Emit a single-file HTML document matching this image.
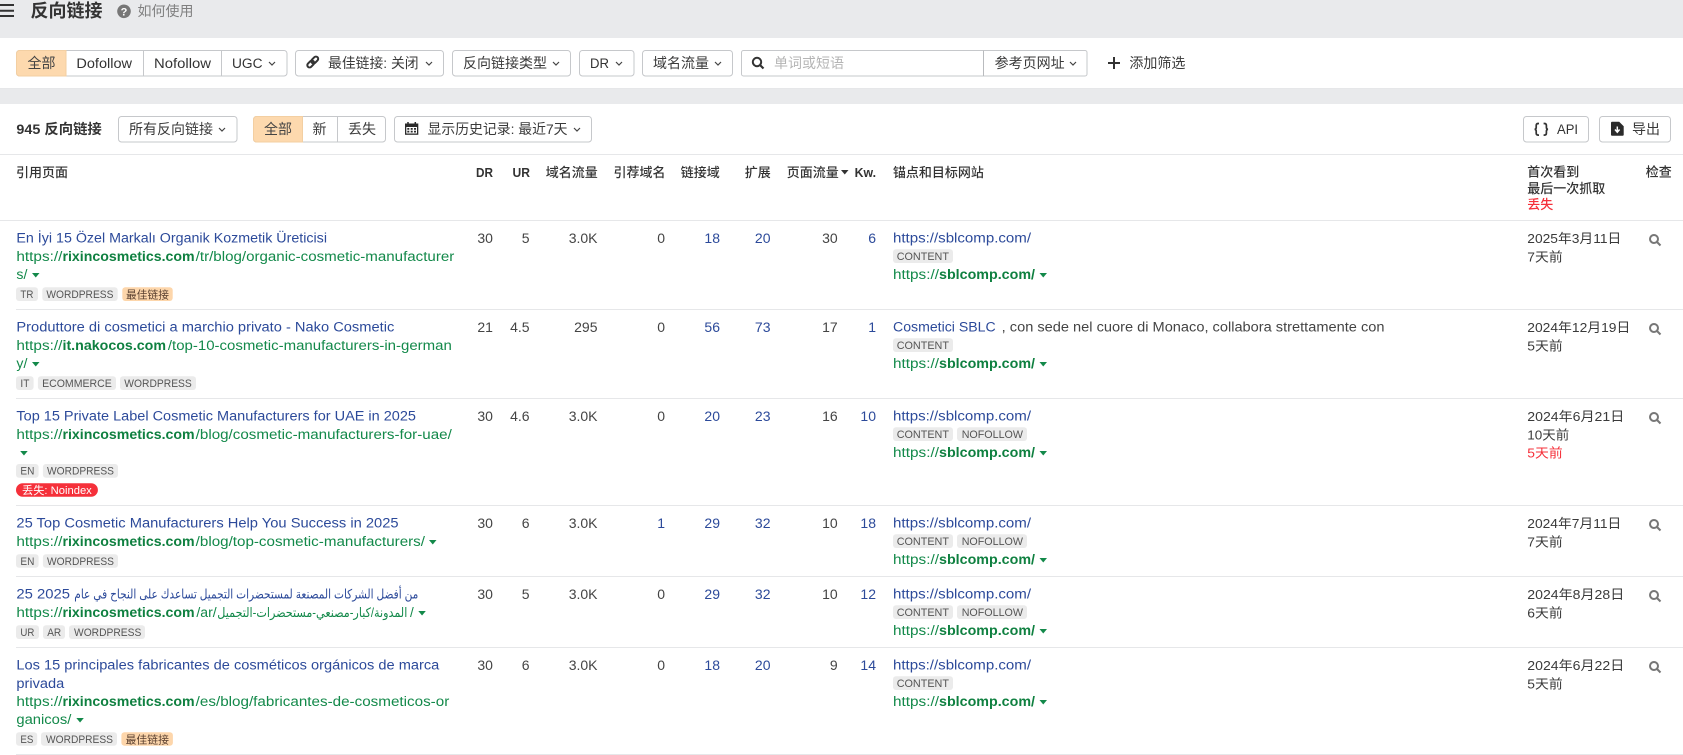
<!DOCTYPE html>
<html lang="zh-CN"><head><meta charset="utf-8"><title>反向链接</title>
<style>
html,body{margin:0;padding:0;background:#fff;overflow:hidden}
svg{display:block;position:absolute;left:0;top:0}
text{font-family:"Liberation Sans","Noto Sans CJK SC",sans-serif;font-size:13.5px;fill:#333}
.h{font-size:13px;font-weight:500;fill:#333}
.hl{font-size:13px;font-weight:700;fill:#333}
.n{font-size:14px;fill:#444;text-anchor:end}
.nb{font-size:14px;fill:#2c4a9a;text-anchor:end}
.l{fill:#2c4a9a}
.g{fill:#13894a}
.gb{fill:#0f8040;font-weight:700}
.a{font-family:"Liberation Sans","DejaVu Sans",sans-serif}
.tg{font-size:11px;fill:#555}
.tc{font-size:11px;fill:#5a4030}
.d{font-size:13px;fill:#3a3a3a}
.b{fill:#fff;stroke:#c6c8cb}
.ln{stroke:#e6e7e9;stroke-width:1}
.ch{fill:none;stroke:#444;stroke-width:1.2}
.tag{fill:#ebebeb}
.best{fill:#fdd6ab}
.s{fill:none;stroke:#777;stroke-width:2}
.tri{fill:#13894a}
</style></head><body>
<svg width="1683" height="755" viewBox="0 0 1683 755" xmlns="http://www.w3.org/2000/svg">
<rect x="0" y="0" width="1683" height="38" fill="#e9eaec"/>
<rect x="0" y="88" width="1683" height="16" fill="#e9eaec"/>
<path class="ln" d="M0 88.500H1683M0 154.500H1683M0 220.500H1683M16 309.500H1683M16 398.500H1683M16 505.500H1683M16 576.500H1683M16 647.500H1683M16 754.500H1683"/>

<!-- top -->
<path d="M0 5H14M0 10.700H14M0 16H14" stroke="#333" stroke-width="2" fill="none"/>
<text x="30.500" y="17" style="font-size:18px;font-weight:700;fill:#333">反向链接</text>
<circle cx="124" cy="11.300" r="6.800" fill="#777"/>
<text x="124" y="15.300" text-anchor="middle" style="font-size:11px;font-weight:700;fill:#fff">?</text>
<text x="137.500" y="16" style="font-size:14px;fill:#808080">如何使用</text>

<!-- filter row -->
<rect class="b" x="16.500" y="50.500" width="270.500" height="25.500" rx="3"/>
<path d="M19.500 50.500H66V76H19.500a3 3 0 0 1-3-3V53.500a3 3 0 0 1 3-3z" fill="#fdd9ae" stroke="#f3cfa2"/>
<path d="M143.500 50.500V76M221.500 50.500V76" stroke="#c6c8cb"/>
<text x="27.500" y="68" style="font-size:14px;fill:#444">全部</text>
<text x="76.400" y="68" textLength="55.600" lengthAdjust="spacingAndGlyphs">Dofollow</text>
<text x="154" y="68" textLength="57" lengthAdjust="spacingAndGlyphs">Nofollow</text>
<text x="232" y="68" textLength="30.500" lengthAdjust="spacingAndGlyphs">UGC</text>
<path class="ch" d="M269 62l3 3 3-3"/>

<rect class="b" x="295.500" y="50.500" width="148" height="25.500" rx="3"/>
<g fill="none" stroke="#333" stroke-width="2" transform="rotate(-45 312.750 62)"><rect x="306" y="59.750" width="7.800" height="4.500" rx="2.250"/><rect x="311.700" y="59.750" width="7.800" height="4.500" rx="2.250"/></g>
<text x="328" y="68" textLength="90.600" lengthAdjust="spacingAndGlyphs" style="font-size:14px;fill:#3a3a3a">最佳链接: 关闭</text>
<path class="ch" d="M426 62l3 3 3-3"/>

<rect class="b" x="452.500" y="50.500" width="118" height="25.500" rx="3"/>
<text x="463" y="68" style="font-size:14px;fill:#3a3a3a">反向链接类型</text>
<path class="ch" d="M553 62l3 3 3-3"/>

<rect class="b" x="579.500" y="50.500" width="54.500" height="25.500" rx="3"/>
<text x="590" y="68" textLength="19" lengthAdjust="spacingAndGlyphs">DR</text>
<path class="ch" d="M616 62l3 3 3-3"/>

<rect class="b" x="642.500" y="50.500" width="90" height="25.500" rx="3"/>
<text x="653" y="68" style="font-size:14px;fill:#3a3a3a">域名流量</text>
<path class="ch" d="M715 62l3 3 3-3"/>

<rect class="b" x="741.500" y="50.500" width="345.500" height="25.500" rx="2"/>
<path d="M983.500 50.500V76" stroke="#b9bbbe"/>
<circle cx="757" cy="62" r="4.200" fill="none" stroke="#333" stroke-width="2"/><path d="M760 65l3.500 3.500" stroke="#333" stroke-width="2.200"/>
<text x="774" y="68" style="font-size:14px;fill:#b5b5b5">单词或短语</text>
<text x="994.600" y="68" style="font-size:14px;fill:#3a3a3a">参考页网址</text>
<path class="ch" d="M1070 62l3 3 3-3"/>
<path d="M1108 63H1120M1114 57V69" stroke="#333" stroke-width="2"/>
<text x="1129.400" y="68" style="font-size:14px;fill:#3a3a3a">添加筛选</text>

<!-- toolbar 2 -->
<text x="16.400" y="134" textLength="85.400" lengthAdjust="spacingAndGlyphs" style="font-size:14px;font-weight:700;fill:#333">945 反向链接</text>
<rect class="b" x="118.500" y="116.500" width="118.500" height="25.500" rx="3"/>
<text x="129" y="134" style="font-size:14px;fill:#3a3a3a">所有反向链接</text>
<path class="ch" d="M219 128l3 3 3-3"/>
<rect class="b" x="253.500" y="116.500" width="132" height="25.500" rx="3"/>
<path d="M256.500 116.500H302.500V142H256.500a3 3 0 0 1-3-3V119.500a3 3 0 0 1 3-3z" fill="#fdd9ae" stroke="#f3cfa2"/>
<path d="M337.500 116.500V142" stroke="#c6c8cb"/>
<text x="264" y="134" style="font-size:14px;fill:#444">全部</text>
<text x="312.500" y="134" style="font-size:14px;fill:#3a3a3a">新</text>
<text x="348" y="134" style="font-size:14px;fill:#3a3a3a">丢失</text>
<rect class="b" x="394.500" y="116.500" width="197" height="25.500" rx="3"/>
<path d="M405 123.500h13.300v11.300h-13.300z" fill="#2b2b2b"/><path d="M408 122v2.500M415.300 122v2.500" stroke="#2b2b2b" stroke-width="1.500"/>
<path d="M406.300 127h10.700v6.500h-10.700z" fill="#fff"/><path d="M407.300 128h2v1.700h-2zM410.700 128h2v1.700h-2zM414 128h2v1.700h-2zM407.300 130.800h2v1.700h-2zM410.700 130.800h2v1.700h-2zM414 130.800h2v1.700h-2z" fill="#2b2b2b"/>
<text x="427.500" y="134" textLength="140" lengthAdjust="spacingAndGlyphs" style="font-size:14px;fill:#3a3a3a">显示历史记录: 最近7天</text>
<path class="ch" d="M574 128l3 3 3-3"/>

<rect class="b" x="1523.500" y="116.500" width="65" height="25.500" rx="3"/>
<path d="M1539 123.500h-.8q-2 0-2 2v2q0 1.500-1.500 1.800 1.500.3 1.500 1.800v2q0 2 2 2h.8M1543.600 123.500h.8q2 0 2 2v2q0 1.500 1.500 1.800-1.500.3-1.500 1.800v2q0 2-2 2h-.8" fill="none" stroke="#333" stroke-width="1.700"/>
<text x="1557" y="134" textLength="21" lengthAdjust="spacingAndGlyphs">API</text>
<rect class="b" x="1599.500" y="116.500" width="71" height="25.500" rx="3"/>
<path d="M1612 121.700h7.200l4.500 4.500v8.500a1 1 0 0 1-1 1h-10.700a1 1 0 0 1-1-1v-12a1 1 0 0 1 1-1z" fill="#2b2b2b"/><path d="M1617.300 126.500v5M1615 129.500l2.300 2.700 2.300-2.700" stroke="#fff" stroke-width="1.500" fill="none"/>
<text x="1632" y="134" style="font-size:14px;fill:#3a3a3a">导出</text>

<!-- header -->
<g>
<text class="h" x="16" y="177">引用页面</text>
<text class="hl" x="476" y="177" textLength="17" lengthAdjust="spacingAndGlyphs">DR</text>
<text class="hl" x="512.500" y="177" textLength="17.500" lengthAdjust="spacingAndGlyphs">UR</text>
<text class="h" x="545.700" y="177">域名流量</text>
<text class="h" x="613.500" y="177">引荐域名</text>
<text class="h" x="680.800" y="177">链接域</text>
<text class="h" x="744.700" y="177">扩展</text>
<text class="h" x="786.800" y="177">页面流量</text>
<path d="M841 170h7.500l-3.750 4.500z" fill="#333"/>
<text class="hl" x="854.600" y="177" textLength="21.400" lengthAdjust="spacingAndGlyphs">Kw.</text>
<text class="h" x="892.900" y="177">锚点和目标网站</text>
<text class="h" x="1527.300" y="176.500">首次看到</text>
<text class="h" x="1527.300" y="193">最后一次抓取</text>
<text class="h" x="1527.300" y="209" style="fill:#f5303a">丢失</text>
<text class="h" x="1645.700" y="176.500">检查</text>
</g>

<!-- row 1 -->
<text class="l" x="16.400" y="242.500" textLength="310.600" lengthAdjust="spacingAndGlyphs">En İyi 15 Özel Markalı Organik Kozmetik Üreticisi</text>
<text class="g" x="16.400" y="261" textLength="46" lengthAdjust="spacingAndGlyphs">https://</text>
<text class="gb" x="62.500" y="261" textLength="132.100" lengthAdjust="spacingAndGlyphs">rixincosmetics.com</text>
<text class="g" x="195.700" y="261" textLength="258.600" lengthAdjust="spacingAndGlyphs">/tr/blog/organic-cosmetic-manufacturer</text>
<text class="g" x="16.400" y="279" textLength="11" lengthAdjust="spacingAndGlyphs">s/</text>
<path class="tri" d="M32 273h7.500l-3.750 4.500z"/>
<rect class="tag" x="16" y="287.300" width="22" height="13.700" rx="3"/><text class="tg" x="20.400" y="298" textLength="13" lengthAdjust="spacingAndGlyphs">TR</text>
<rect class="tag" x="42.300" y="287.300" width="75.400" height="13.700" rx="3"/><text class="tg" x="46.400" y="298" textLength="67" lengthAdjust="spacingAndGlyphs">WORDPRESS</text>
<rect class="best" x="122.300" y="287.300" width="50.400" height="13.700" rx="3"/><text class="tc" x="126" y="298.500" textLength="43" lengthAdjust="spacingAndGlyphs">最佳链接</text>
<text class="n" x="492.900" y="243">30</text><text class="n" x="529.600" y="243">5</text><text class="n" x="597.500" y="243">3.0K</text><text class="n" x="665" y="243">0</text><text class="nb" x="720" y="243">18</text><text class="nb" x="770.500" y="243">20</text><text class="n" x="837.700" y="243">30</text><text class="nb" x="876" y="243">6</text>
<text class="l" x="893" y="242.500" textLength="138" lengthAdjust="spacingAndGlyphs">https://sblcomp.com/</text>
<rect class="tag" x="893" y="249.300" width="60" height="13.700" rx="3"/><text class="tg" x="896.700" y="260" textLength="52.300" lengthAdjust="spacingAndGlyphs">CONTENT</text>
<text class="g" x="893" y="279" textLength="46" lengthAdjust="spacingAndGlyphs">https://</text><text class="gb" x="939" y="279" textLength="96" lengthAdjust="spacingAndGlyphs">sblcomp.com/</text>
<path class="tri" d="M1039.500 273h7.500l-3.750 4.500z"/>
<text class="d" x="1527.300" y="243" textLength="94" lengthAdjust="spacingAndGlyphs">2025年3月11日</text>
<text class="d" x="1527.300" y="261.500" textLength="35.400" lengthAdjust="spacingAndGlyphs">7天前</text>
<circle class="s" cx="1654" cy="239" r="4"/><path class="s" d="M1657 242l3.500 3.500"/>

<!-- row 2 -->
<text class="l" x="16.400" y="331.500" textLength="377.900" lengthAdjust="spacingAndGlyphs">Produttore di cosmetici a marchio privato - Nako Cosmetic</text>
<text class="g" x="16.400" y="350" textLength="46" lengthAdjust="spacingAndGlyphs">https://</text>
<text class="gb" x="62.500" y="350" textLength="103.500" lengthAdjust="spacingAndGlyphs">it.nakocos.com</text>
<text class="g" x="167.900" y="350" textLength="283.900" lengthAdjust="spacingAndGlyphs">/top-10-cosmetic-manufacturers-in-german</text>
<text class="g" x="16.400" y="368" textLength="11" lengthAdjust="spacingAndGlyphs">y/</text>
<path class="tri" d="M32 362h7.500l-3.750 4.500z"/>
<rect class="tag" x="16" y="376.300" width="17.600" height="13.700" rx="3"/><text class="tg" x="20.400" y="387" textLength="9" lengthAdjust="spacingAndGlyphs">IT</text>
<rect class="tag" x="37.900" y="376.300" width="78.100" height="13.700" rx="3"/><text class="tg" x="42.100" y="387" textLength="69.700" lengthAdjust="spacingAndGlyphs">ECOMMERCE</text>
<rect class="tag" x="120" y="376.300" width="76" height="13.700" rx="3"/><text class="tg" x="124.300" y="387" textLength="67.500" lengthAdjust="spacingAndGlyphs">WORDPRESS</text>
<text class="n" x="492.900" y="332">21</text><text class="n" x="529.600" y="332">4.5</text><text class="n" x="597.500" y="332">295</text><text class="n" x="665" y="332">0</text><text class="nb" x="720" y="332">56</text><text class="nb" x="770.500" y="332">73</text><text class="n" x="837.700" y="332">17</text><text class="nb" x="876" y="332">1</text>
<text class="l" x="893" y="331.500" textLength="102.700" lengthAdjust="spacingAndGlyphs">Cosmetici SBLC</text>
<text x="1001.700" y="331.500" textLength="382.800" lengthAdjust="spacingAndGlyphs" style="fill:#444">, con sede nel cuore di Monaco, collabora strettamente con</text>
<rect class="tag" x="893" y="338.300" width="60" height="13.700" rx="3"/><text class="tg" x="896.700" y="349" textLength="52.300" lengthAdjust="spacingAndGlyphs">CONTENT</text>
<text class="g" x="893" y="368" textLength="46" lengthAdjust="spacingAndGlyphs">https://</text><text class="gb" x="939" y="368" textLength="96" lengthAdjust="spacingAndGlyphs">sblcomp.com/</text>
<path class="tri" d="M1039.500 362h7.500l-3.750 4.500z"/>
<text class="d" x="1527.300" y="332" textLength="103" lengthAdjust="spacingAndGlyphs">2024年12月19日</text>
<text class="d" x="1527.300" y="350.500" textLength="35.400" lengthAdjust="spacingAndGlyphs">5天前</text>
<circle class="s" cx="1654" cy="328" r="4"/><path class="s" d="M1657 331l3.500 3.500"/>

<!-- row 3 -->
<text class="l" x="16.400" y="420.500" textLength="399.600" lengthAdjust="spacingAndGlyphs">Top 15 Private Label Cosmetic Manufacturers for UAE in 2025</text>
<text class="g" x="16.400" y="439" textLength="46" lengthAdjust="spacingAndGlyphs">https://</text>
<text class="gb" x="62.500" y="439" textLength="132.100" lengthAdjust="spacingAndGlyphs">rixincosmetics.com</text>
<text class="g" x="195.700" y="439" textLength="256.100" lengthAdjust="spacingAndGlyphs">/blog/cosmetic-manufacturers-for-uae/</text>
<path class="tri" d="M20.200 451h7.500l-3.750 4.500z"/>
<rect class="tag" x="16" y="464" width="22.600" height="13.700" rx="3"/><text class="tg" x="20.400" y="474.700" textLength="14" lengthAdjust="spacingAndGlyphs">EN</text>
<rect class="tag" x="42.900" y="464" width="75.100" height="13.700" rx="3"/><text class="tg" x="47" y="474.700" textLength="67" lengthAdjust="spacingAndGlyphs">WORDPRESS</text>
<rect x="16" y="483.300" width="81.900" height="13.400" rx="6.700" fill="#f5303a"/><text x="22" y="494" textLength="69.800" lengthAdjust="spacingAndGlyphs" style="font-size:11px;fill:#fff">丢失: Noindex</text>
<text class="n" x="492.900" y="421">30</text><text class="n" x="529.600" y="421">4.6</text><text class="n" x="597.500" y="421">3.0K</text><text class="n" x="665" y="421">0</text><text class="nb" x="720" y="421">20</text><text class="nb" x="770.500" y="421">23</text><text class="n" x="837.700" y="421">16</text><text class="nb" x="876" y="421">10</text>
<text class="l" x="893" y="420.500" textLength="138" lengthAdjust="spacingAndGlyphs">https://sblcomp.com/</text>
<rect class="tag" x="893" y="427.300" width="60" height="13.700" rx="3"/><text class="tg" x="896.700" y="438" textLength="52.300" lengthAdjust="spacingAndGlyphs">CONTENT</text>
<rect class="tag" x="957" y="427.300" width="70" height="13.700" rx="3"/><text class="tg" x="961.700" y="438" textLength="61.300" lengthAdjust="spacingAndGlyphs">NOFOLLOW</text>
<text class="g" x="893" y="457" textLength="46" lengthAdjust="spacingAndGlyphs">https://</text><text class="gb" x="939" y="457" textLength="96" lengthAdjust="spacingAndGlyphs">sblcomp.com/</text>
<path class="tri" d="M1039.500 451h7.500l-3.750 4.500z"/>
<text class="d" x="1527.300" y="421" textLength="97" lengthAdjust="spacingAndGlyphs">2024年6月21日</text>
<text class="d" x="1527.300" y="439.500" textLength="42" lengthAdjust="spacingAndGlyphs">10天前</text>
<text class="d" x="1527.300" y="457.500" textLength="35.400" lengthAdjust="spacingAndGlyphs" style="fill:#f5303a">5天前</text>
<circle class="s" cx="1654" cy="417" r="4"/><path class="s" d="M1657 420l3.500 3.500"/>

<!-- row 4 -->
<text class="l" x="16.400" y="527.500" textLength="382.200" lengthAdjust="spacingAndGlyphs">25 Top Cosmetic Manufacturers Help You Success in 2025</text>
<text class="g" x="16.400" y="546" textLength="46" lengthAdjust="spacingAndGlyphs">https://</text>
<text class="gb" x="62.500" y="546" textLength="132.100" lengthAdjust="spacingAndGlyphs">rixincosmetics.com</text>
<text class="g" x="195.700" y="546" textLength="229.300" lengthAdjust="spacingAndGlyphs">/blog/top-cosmetic-manufacturers/</text>
<path class="tri" d="M429 540h7.500l-3.750 4.500z"/>
<rect class="tag" x="16" y="554.300" width="22.600" height="13.400" rx="3"/><text class="tg" x="20.400" y="565" textLength="14" lengthAdjust="spacingAndGlyphs">EN</text>
<rect class="tag" x="42.900" y="554.300" width="75.100" height="13.400" rx="3"/><text class="tg" x="47" y="565" textLength="67" lengthAdjust="spacingAndGlyphs">WORDPRESS</text>
<text class="n" x="492.900" y="528">30</text><text class="n" x="529.600" y="528">6</text><text class="n" x="597.500" y="528">3.0K</text><text class="nb" x="665" y="528">1</text><text class="nb" x="720" y="528">29</text><text class="nb" x="770.500" y="528">32</text><text class="n" x="837.700" y="528">10</text><text class="nb" x="876" y="528">18</text>
<text class="l" x="893" y="527.500" textLength="138" lengthAdjust="spacingAndGlyphs">https://sblcomp.com/</text>
<rect class="tag" x="893" y="534.300" width="60" height="13.700" rx="3"/><text class="tg" x="896.700" y="545" textLength="52.300" lengthAdjust="spacingAndGlyphs">CONTENT</text>
<rect class="tag" x="957" y="534.300" width="70" height="13.700" rx="3"/><text class="tg" x="961.700" y="545" textLength="61.300" lengthAdjust="spacingAndGlyphs">NOFOLLOW</text>
<text class="g" x="893" y="564" textLength="46" lengthAdjust="spacingAndGlyphs">https://</text><text class="gb" x="939" y="564" textLength="96" lengthAdjust="spacingAndGlyphs">sblcomp.com/</text>
<path class="tri" d="M1039.500 558h7.500l-3.750 4.500z"/>
<text class="d" x="1527.300" y="528" textLength="94" lengthAdjust="spacingAndGlyphs">2024年7月11日</text>
<text class="d" x="1527.300" y="546.500" textLength="35.400" lengthAdjust="spacingAndGlyphs">7天前</text>
<circle class="s" cx="1654" cy="524" r="4"/><path class="s" d="M1657 527l3.500 3.500"/>

<!-- row 5 -->
<text class="l" x="16.400" y="598.500" textLength="53.600" lengthAdjust="spacingAndGlyphs">25 2025</text>
<text class="l a" x="74.300" y="598.500" textLength="344" lengthAdjust="spacingAndGlyphs" style="font-size:13px">من أفضل الشركات المصنعة لمستحضرات التجميل تساعدك على النجاح في عام</text>
<text class="g" x="16.400" y="617" textLength="46" lengthAdjust="spacingAndGlyphs">https://</text>
<text class="gb" x="62.500" y="617" textLength="132.100" lengthAdjust="spacingAndGlyphs">rixincosmetics.com</text>
<text class="g" x="196.400" y="617" textLength="20.300" lengthAdjust="spacingAndGlyphs">/ar/</text>
<text class="g a" x="217.300" y="617" textLength="190" lengthAdjust="spacingAndGlyphs" style="font-size:13px">المدونة/كبار-مصنعي-مستحضرات-التجميل</text>
<text class="g" x="410" y="617">/</text>
<path class="tri" d="M418.300 611h7.500l-3.750 4.500z"/>
<rect class="tag" x="16" y="625.300" width="23" height="13.700" rx="3"/><text class="tg" x="20.400" y="636" textLength="14" lengthAdjust="spacingAndGlyphs">UR</text>
<rect class="tag" x="43" y="625.300" width="22" height="13.700" rx="3"/><text class="tg" x="47.200" y="636" textLength="14" lengthAdjust="spacingAndGlyphs">AR</text>
<rect class="tag" x="69" y="625.300" width="76" height="13.700" rx="3"/><text class="tg" x="74" y="636" textLength="67.300" lengthAdjust="spacingAndGlyphs">WORDPRESS</text>
<text class="n" x="492.900" y="599">30</text><text class="n" x="529.600" y="599">5</text><text class="n" x="597.500" y="599">3.0K</text><text class="n" x="665" y="599">0</text><text class="nb" x="720" y="599">29</text><text class="nb" x="770.500" y="599">32</text><text class="n" x="837.700" y="599">10</text><text class="nb" x="876" y="599">12</text>
<text class="l" x="893" y="598.500" textLength="138" lengthAdjust="spacingAndGlyphs">https://sblcomp.com/</text>
<rect class="tag" x="893" y="605.300" width="60" height="13.700" rx="3"/><text class="tg" x="896.700" y="616" textLength="52.300" lengthAdjust="spacingAndGlyphs">CONTENT</text>
<rect class="tag" x="957" y="605.300" width="70" height="13.700" rx="3"/><text class="tg" x="961.700" y="616" textLength="61.300" lengthAdjust="spacingAndGlyphs">NOFOLLOW</text>
<text class="g" x="893" y="635" textLength="46" lengthAdjust="spacingAndGlyphs">https://</text><text class="gb" x="939" y="635" textLength="96" lengthAdjust="spacingAndGlyphs">sblcomp.com/</text>
<path class="tri" d="M1039.500 629h7.500l-3.750 4.500z"/>
<text class="d" x="1527.300" y="599" textLength="97" lengthAdjust="spacingAndGlyphs">2024年8月28日</text>
<text class="d" x="1527.300" y="617.500" textLength="35.400" lengthAdjust="spacingAndGlyphs">6天前</text>
<circle class="s" cx="1654" cy="595" r="4"/><path class="s" d="M1657 598l3.500 3.500"/>

<!-- row 6 -->
<text class="l" x="16.400" y="669.500" textLength="422.900" lengthAdjust="spacingAndGlyphs">Los 15 principales fabricantes de cosméticos orgánicos de marca</text>
<text class="l" x="16.400" y="688" textLength="47.900" lengthAdjust="spacingAndGlyphs">privada</text>
<text class="g" x="16.400" y="706" textLength="46" lengthAdjust="spacingAndGlyphs">https://</text>
<text class="gb" x="62.500" y="706" textLength="132.100" lengthAdjust="spacingAndGlyphs">rixincosmetics.com</text>
<text class="g" x="195.700" y="706" textLength="253.600" lengthAdjust="spacingAndGlyphs">/es/blog/fabricantes-de-cosmeticos-or</text>
<text class="g" x="16.400" y="724" textLength="55" lengthAdjust="spacingAndGlyphs">ganicos/</text>
<path class="tri" d="M76.300 718h7.500l-3.750 4.500z"/>
<rect class="tag" x="16" y="732.300" width="21.200" height="13.400" rx="3"/><text class="tg" x="20.400" y="743" textLength="13" lengthAdjust="spacingAndGlyphs">ES</text>
<rect class="tag" x="41" y="732.300" width="76" height="13.400" rx="3"/><text class="tg" x="46" y="743" textLength="67" lengthAdjust="spacingAndGlyphs">WORDPRESS</text>
<rect class="best" x="121.400" y="732.300" width="51.500" height="13.400" rx="3"/><text class="tc" x="125.500" y="743.500" textLength="43.500" lengthAdjust="spacingAndGlyphs">最佳链接</text>
<text class="n" x="492.900" y="670">30</text><text class="n" x="529.600" y="670">6</text><text class="n" x="597.500" y="670">3.0K</text><text class="n" x="665" y="670">0</text><text class="nb" x="720" y="670">18</text><text class="nb" x="770.500" y="670">20</text><text class="n" x="837.700" y="670">9</text><text class="nb" x="876" y="670">14</text>
<text class="l" x="893" y="669.500" textLength="138" lengthAdjust="spacingAndGlyphs">https://sblcomp.com/</text>
<rect class="tag" x="893" y="676.300" width="60" height="13.700" rx="3"/><text class="tg" x="896.700" y="687" textLength="52.300" lengthAdjust="spacingAndGlyphs">CONTENT</text>
<text class="g" x="893" y="706" textLength="46" lengthAdjust="spacingAndGlyphs">https://</text><text class="gb" x="939" y="706" textLength="96" lengthAdjust="spacingAndGlyphs">sblcomp.com/</text>
<path class="tri" d="M1039.500 700h7.500l-3.750 4.500z"/>
<text class="d" x="1527.300" y="670" textLength="97" lengthAdjust="spacingAndGlyphs">2024年6月22日</text>
<text class="d" x="1527.300" y="688.500" textLength="35.400" lengthAdjust="spacingAndGlyphs">5天前</text>
<circle class="s" cx="1654" cy="666" r="4"/><path class="s" d="M1657 669l3.500 3.500"/>
</svg>
</body></html>
